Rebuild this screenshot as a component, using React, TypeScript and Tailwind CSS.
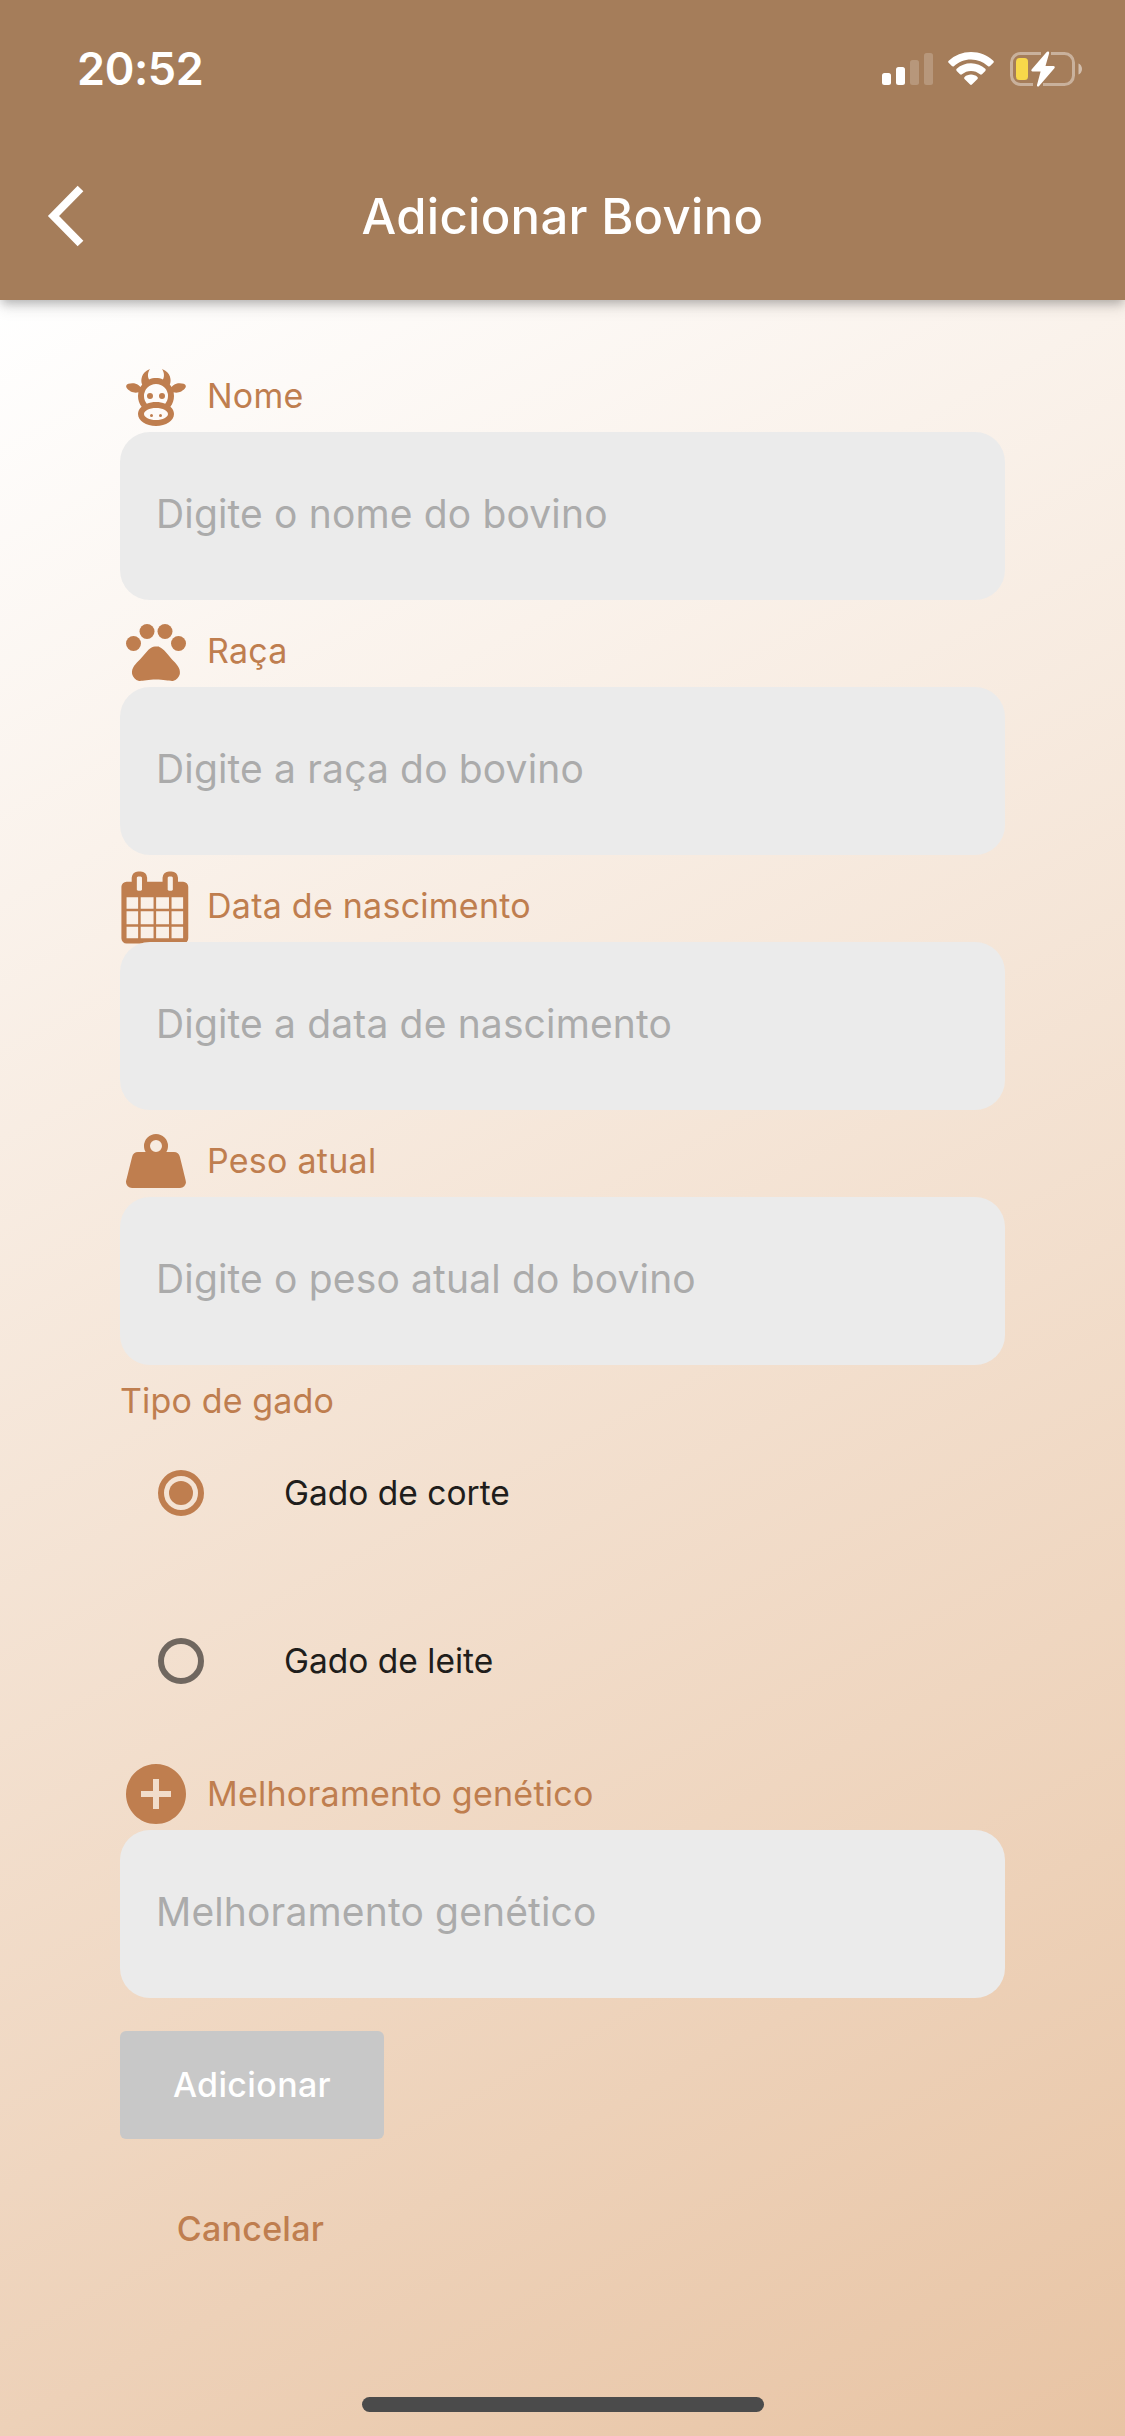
import type { ReactNode } from "react";
import { MdAddCircle, MdPets } from "react-icons/md";

const COW =
  "M10.5,18A0.5,0.5 0 0,1 11,18.5A0.5,0.5 0 0,1 10.5,19A0.5,0.5 0 0,1 10,18.5A0.5,0.5 0 0,1 10.5,18M13.5,18A0.5,0.5 0 0,1 14,18.5A0.5,0.5 0 0,1 13.5,19A0.5,0.5 0 0,1 13,18.5A0.5,0.5 0 0,1 13.5,18M10,11A1,1 0 0,1 11,12A1,1 0 0,1 10,13A1,1 0 0,1 9,12A1,1 0 0,1 10,11M14,11A1,1 0 0,1 15,12A1,1 0 0,1 14,13A1,1 0 0,1 13,12A1,1 0 0,1 14,11M18,18C18,20.21 15.31,22 12,22C8.69,22 6,20.21 6,18C6,17.1 6.45,16.27 7.2,15.6C6.45,14.6 6,13.35 6,12L6.12,10.78C5.58,10.93 4.93,10.93 4.4,10.78C3.38,10.5 1.84,9.35 2.07,8.55C2.3,7.75 4.21,7.6 5.23,7.9C5.82,8.07 6.45,8.5 6.82,8.96L7.39,8.15C6.79,7.05 7,4 10,3L9.91,3.14V3.14C9.63,3.58 8.91,4.97 9.67,6.47C10.39,6.17 11.17,6 12,6C12.83,6 13.61,6.17 14.33,6.47C15.09,4.97 14.37,3.58 14.09,3.14L14,3C17,4 17.21,7.05 16.61,8.15L17.18,8.96C17.55,8.5 18.18,8.07 18.77,7.9C19.79,7.6 21.7,7.75 21.93,8.55C22.16,9.35 20.62,10.5 19.6,10.78C19.07,10.93 18.42,10.93 17.88,10.78L18,12C18,13.35 17.55,14.6 16.8,15.6C17.55,16.27 18,17.1 18,18M12,16C9.79,16 8,16.9 8,18C8,19.1 9.79,20 12,20C14.21,20 16,19.1 16,18C16,16.9 14.21,16 12,16M12,14C13.12,14 14.17,14.21 15.07,14.56C15.65,13.87 16,13 16,12A4,4 0 0,0 12,8A4,4 0 0,0 8,12C8,13 8.35,13.87 8.93,14.56C9.83,14.21 10.88,14 12,14M14.09,3.14V3.14Z";

const WEIGHT =
  "M12,3A4,4 0 0,1 16,7C16,7.73 15.81,8.41 15.46,9H18C18.95,9 19.75,9.67 19.95,10.56C21.96,18.57 22,18.78 22,19A2,2 0 0,1 20,21H4A2,2 0 0,1 2,19C2,18.78 2.04,18.57 4.05,10.56C4.25,9.67 5.05,9 6,9H8.54C8.19,8.41 8,7.73 8,7A4,4 0 0,1 12,3M12,5A2,2 0 0,0 10,7A2,2 0 0,0 12,9A2,2 0 0,0 14,7A2,2 0 0,0 12,5Z";

const CALENDAR =
  "M192 1664h288v-288h-288v288zm352 0h320v-288h-320v288zm-352-352h288v-320h-288v320zm352 0h320v-320h-320v320zm-352-384h288v-288h-288v288zm736 736h320v-288h-320v288zm-384-736h320v-288h-320v288zm768 736h288v-288h-288v288zm-384-352h320v-320h-320v320zm-352-864v-288q0-13-9.500-22.500t-22.500-9.500h-64q-13 0-22.500 9.500t-9.500 22.500v288q0 13 9.500 22.500t22.500 9.500h64q13 0 22.500-9.500t9.500-22.500zm736 864h288v-320h-288v320zm-384-384h320v-288h-320v288zm384 0h288v-288h-288v288zm32-480v-288q0-13-9.500-22.500t-22.500-9.500h-64q-13 0-22.500 9.500t-9.500 22.500v288q0 13 9.500 22.500t22.500 9.500h64q13 0 22.500-9.500t9.500-22.500zm384-64v1280q0 52-38 90t-90 38h-1408q-52 0-90-38t-38-90v-1280q0-52 38-90t90-38h128v-96q0-66 47-113t113-47h64q66 0 113 47t47 113v96h384v-96q0-66 47-113t113-47h64q66 0 113 47t47 113v96h128q52 0 90 38t38 90z";

function PathIcon({ d, viewBox = "0 0 24 24" }: { d: string; viewBox?: string }) {
  return (
    <svg viewBox={viewBox} className="size-[72px] overflow-visible" fill="currentColor">
      <path d={d} />
    </svg>
  );
}

function StatusBar() {
  return (
    <div className="flex h-[138px] items-center justify-between pl-[77px] pr-[42px]">
      <span className="text-[45px] font-semibold tracking-[-0.4px]">20:52</span>
      <div className="flex items-center">
        <svg className="mr-[14px] h-[36px] w-[52px]" viewBox="0 0 52 36" fill="white">
          <rect x="0" y="22" width="9" height="12" rx="2.5" />
          <rect x="14" y="16" width="9" height="18" rx="2.5" />
          <rect x="28" y="9" width="9" height="25" rx="2.5" opacity="0.2" />
          <rect x="42" y="2" width="9" height="32" rx="2.5" opacity="0.2" />
        </svg>
        <svg className="mr-[14px] h-[36px] w-[47px]" viewBox="0 0 47 36" fill="white">
          <path d="M23 1c8.600 0 16.400 3.300 22.300 8.700.7.600.7 1.500.1 2.100l-3.300 3.300c-.6.600-1.400.6-2 .1A25.300 25.300 0 0 0 23 8.500c-6.600 0-12.600 2.500-17.100 6.700-.6.500-1.400.5-2-.1L.6 11.800c-.6-.6-.6-1.500.1-2.100A33 33 0 0 1 23 1z" />
          <path d="M23 12.300c5.500 0 10.500 2.100 14.300 5.500.6.600.6 1.500 0 2.100L34 23.200c-.6.600-1.400.6-2 .1a13.700 13.700 0 0 0-18 0c-.6.500-1.400.5-2-.1l-3.300-3.300c-.6-.6-.6-1.500 0-2.100A21.400 21.400 0 0 1 23 12.300z" />
          <path d="M23 23.600c2.500 0 4.700.9 6.400 2.300.6.500.6 1.400.1 2l-5.600 5.700c-.5.500-1.300.5-1.800 0l-5.600-5.700c-.5-.6-.5-1.500.1-2 1.700-1.400 3.900-2.300 6.400-2.300z" />
        </svg>
        <svg className="h-[36px] w-[74px]" viewBox="0 0 74 36">
          <path
            d="M32 2.500H11.500a9 9 0 0 0-9 9v13a9 9 0 0 0 9 9H24M34 33.500h21.500a9 9 0 0 0 9-9v-13a9 9 0 0 0-9-9H42"
            fill="none"
            stroke="white"
            strokeOpacity="0.4"
            strokeWidth="3"
          />
          <path d="M69.500 12.500c2 .8 3.500 3 3.500 5.500s-1.500 4.700-3.500 5.500z" fill="white" fillOpacity="0.5" />
          <rect x="7" y="7" width="12" height="22" rx="3.500" fill="#f8d84a" />
          <path
            d="M39.300.6c.8.300 1 1 .8 1.800L36.500 15h7.800c1.500 0 1.900 1.300 1.100 2.300L29.900 35.200c-.6.700-2.200.3-1.900-1.200L31.600 20.500h-8c-1.300 0-1.700-1.300-.8-2.300L37.700 1c.5-.5 1-.7 1.600-.4z"
            fill="white"
          />
        </svg>
      </div>
    </div>
  );
}

function Field({ icon, label, placeholder }: { icon: ReactNode; label: string; placeholder: string }) {
  return (
    <div className="flex flex-col">
      <div className="flex h-[72px] items-center gap-[15px] text-[#bf7e4f]">
        {icon}
        <span className="pb-[2px] text-[34px] tracking-[0.25px] whitespace-nowrap">{label}</span>
      </div>
      <input
        type="text"
        placeholder={placeholder}
        className="relative h-[168px] w-full rounded-[30px] bg-[#ebebeb] px-[36px] pb-[6px] text-[39px] tracking-[0.15px] placeholder:text-[#ababab] placeholder:opacity-100"
      />
    </div>
  );
}

function RadioRow({ label, selected }: { label: string; selected?: boolean }) {
  return (
    <div className="flex h-[140px] items-center pl-[38px]">
      <span
        className={
          selected
            ? "flex size-[46px] items-center justify-center rounded-full border-[6px] border-[#bf7e4f]"
            : "flex size-[46px] items-center justify-center rounded-full border-[6px] border-[#70675f]"
        }
      >
        {selected && <span className="size-[24px] rounded-full bg-[#bf7e4f]" />}
      </span>
      <span className="ml-[80px] text-[33.5px] tracking-[0px] text-[#201d1b]">{label}</span>
    </div>
  );
}

export default function App() {
  return (
    <div className="flex h-[2436px] w-[1125px] flex-col font-['Inter','Liberation_Sans',sans-serif]">
      <header className="relative flex h-[300px] flex-col bg-[#a57d5a] text-white shadow-[0_5px_9px_-2px_rgba(0,0,0,0.22),0_8px_14px_0_rgba(0,0,0,0.1)]">
        <StatusBar />
        <div className="grid h-[156px] grid-cols-[1fr_auto_1fr] items-center">
          <svg className="ml-[47px] h-[62px] w-[38px]" viewBox="0 0 38 62" fill="none" stroke="white" strokeWidth="8">
            <path d="M33.500 3.500 6.500 31l27 27.500" />
          </svg>
          <h1 className="pt-[2px] text-[49px] font-medium tracking-[0.3px]">Adicionar Bovino</h1>
        </div>
      </header>
      <main className="flex flex-1 flex-col bg-[linear-gradient(152.200deg,#ffffff_0%,#e8c4a4_100%)] px-[120px] pt-[60px]">
        <div className="flex flex-col gap-[15px]">
          <Field icon={<PathIcon d={COW} />} label="Nome" placeholder="Digite o nome do bovino" />
          <Field icon={<MdPets className="size-[72px]" />} label="Raça" placeholder="Digite a raça do bovino" />
          <Field
            icon={<PathIcon d={CALENDAR} viewBox="29 -36 1792 1792" />}
            label="Data de nascimento"
            placeholder="Digite a data de nascimento"
          />
          <Field icon={<PathIcon d={WEIGHT} />} label="Peso atual" placeholder="Digite o peso atual do bovino" />
        </div>
        <p className="mt-[14px] h-[44px] text-[34px] leading-[43px] tracking-[0.15px] text-[#bf7e4f]">Tipo de gado</p>
        <div className="mb-[27px] flex flex-col gap-[28px]">
          <RadioRow label="Gado de corte" selected />
          <RadioRow label="Gado de leite" />
        </div>
        <Field
          icon={<MdAddCircle className="size-[72px]" />}
          label="Melhoramento genético"
          placeholder="Melhoramento genético"
        />
        <button className="mt-[33px] h-[108px] w-[264px] rounded-[6px] bg-[#c8c8c8] pb-[2px] text-[34px] font-medium tracking-[0.35px] text-white">
          Adicionar
        </button>
        <button className="mt-[36px] h-[108px] w-[264px] pr-[3px] pb-[2px] text-[34px] font-medium tracking-[0.25px] text-[#bf7e4f]">
          Cancelar
        </button>
        <div className="mt-auto mb-[24px] h-[15px] w-[402px] self-center rounded-full bg-[#4b4b4b]" />
      </main>
    </div>
  );
}
